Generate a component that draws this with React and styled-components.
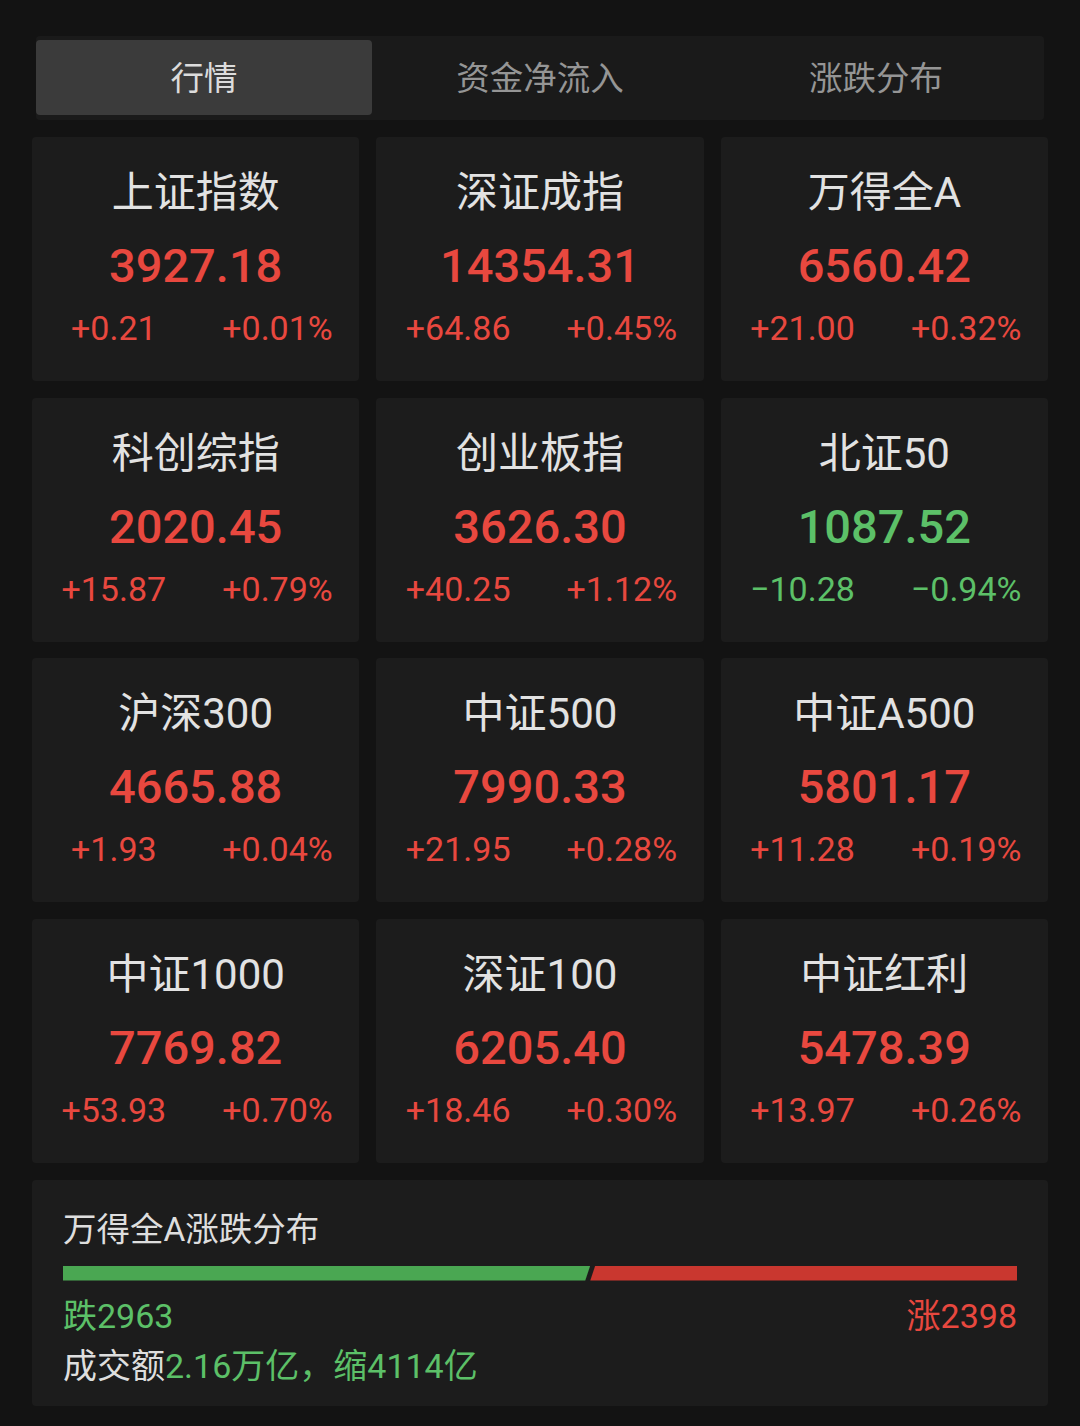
import styled, { createGlobalStyle } from 'styled-components';

const indices = [
  { name: '上证指数', value: '3927.18', change: '+0.21', pct: '+0.01%', up: true },
  { name: '深证成指', value: '14354.31', change: '+64.86', pct: '+0.45%', up: true },
  { name: '万得全A', value: '6560.42', change: '+21.00', pct: '+0.32%', up: true },
  { name: '科创综指', value: '2020.45', change: '+15.87', pct: '+0.79%', up: true },
  { name: '创业板指', value: '3626.30', change: '+40.25', pct: '+1.12%', up: true },
  { name: '北证50', value: '1087.52', change: '−10.28', pct: '−0.94%', up: false },
  { name: '沪深300', value: '4665.88', change: '+1.93', pct: '+0.04%', up: true },
  { name: '中证500', value: '7990.33', change: '+21.95', pct: '+0.28%', up: true },
  { name: '中证A500', value: '5801.17', change: '+11.28', pct: '+0.19%', up: true },
  { name: '中证1000', value: '7769.82', change: '+53.93', pct: '+0.70%', up: true },
  { name: '深证100', value: '6205.40', change: '+18.46', pct: '+0.30%', up: true },
  { name: '中证红利', value: '5478.39', change: '+13.97', pct: '+0.26%', up: true },
];

const tabs = ['行情', '资金净流入', '涨跌分布'];

const RED = '#e8483f';
const GREEN = '#5cc068';

const down = 2963;
const rise = 2398;

export default function App() {
  const downShare = (down / (down + rise)) * 100;
  return (
    <>
      <GlobalStyle />
      <Page>
        <TabBar>
          {tabs.map((t, i) => (
            <Tab key={t} $active={i === 0}>{t}</Tab>
          ))}
        </TabBar>
        <Grid>
          {indices.map((item) => (
            <Card key={item.name}>
              <Name>{item.name}</Name>
              <Value $up={item.up}>{item.value}</Value>
              <Changes $up={item.up}>
                <span>{item.change}</span>
                <span>{item.pct}</span>
              </Changes>
            </Card>
          ))}
        </Grid>
        <Panel>
          <PanelTitle>万得全A涨跌分布</PanelTitle>
          <Bar>
            <DownPart style={{ width: `${downShare}%` }} />
            <UpPart />
          </Bar>
          <Counts>
            <Count $up={false}>跌{down}</Count>
            <Count $up={true}>涨{rise}</Count>
          </Counts>
          <Turnover>
            成交额<em>2.16万亿，缩4114亿</em>
          </Turnover>
        </Panel>
      </Page>
    </>
  );
}

const GlobalStyle = createGlobalStyle`
  html, body {
    margin: 0;
    background: #131313;
  }
  body {
    font-family: Roboto, "Noto Sans CJK SC", sans-serif;
  }
`;

const Page = styled.div`
  width: 1080px;
  height: 1426px;
  box-sizing: border-box;
  padding: 36px 32px 0;
  background: #131313;
`;

const TabBar = styled.div`
  margin: 0 4px 17px;
  height: 84px;
  padding: 4px 0 5px;
  box-sizing: border-box;
  display: grid;
  grid-template-columns: repeat(3, 1fr);
  background: #1a1a1a;
  border-radius: 4px;
`;

const Tab = styled.div`
  display: flex;
  align-items: center;
  justify-content: center;
  padding-bottom: 5px;
  border-radius: 4px;
  font-family: "Noto Sans CJK SC", sans-serif;
  font-size: 33.5px;
  color: ${(p) => (p.$active ? '#dcdcdc' : '#959595')};
  background: ${(p) => (p.$active ? '#3b3b3b' : 'transparent')};
`;

const Grid = styled.div`
  display: grid;
  grid-template-columns: repeat(3, 1fr);
  grid-auto-rows: 244px;
  gap: 16.5px 17px;
`;

const Card = styled.div`
  background: #1c1c1c;
  border-radius: 4px;
  display: flex;
  flex-direction: column;
  align-items: center;
  padding-top: 32px;
  box-sizing: border-box;
`;

const Name = styled.div`
  font-family: Roboto, "Noto Sans CJK SC", sans-serif;
  font-size: 42px;
  line-height: 48px;
  color: #e2e2e2;
`;

const Value = styled.div`
  margin-top: 21px;
  font-size: 47px;
  line-height: 56px;
  font-weight: 500;
  color: ${(p) => (p.$up ? RED : GREEN)};
`;

const Changes = styled.div`
  margin-top: 14px;
  width: 100%;
  display: grid;
  grid-template-columns: 1fr 1fr;
  font-size: 34px;
  line-height: 40px;
  color: ${(p) => (p.$up ? RED : GREEN)};

  span {
    text-align: center;
  }
`;

const Panel = styled.div`
  margin-top: 17px;
  height: 226px;
  background: #1c1c1c;
  border-radius: 4px;
  padding: 30px 31px 0;
  box-sizing: border-box;
`;

const PanelTitle = styled.div`
  font-size: 33.5px;
  line-height: 40px;
  color: #dedede;
`;

const Bar = styled.div`
  margin-top: 16px;
  height: 15px;
  display: flex;
`;

const DownPart = styled.div`
  height: 100%;
  background: #4aa752;
  clip-path: polygon(0 0, 100% 0, calc(100% - 5px) 100%, 0 100%);
`;

const UpPart = styled.div`
  flex: 1;
  height: 100%;
  background: #c9372f;
  clip-path: polygon(5px 0, 100% 0, 100% 100%, 0 100%);
`;

const Counts = styled.div`
  margin-top: 15px;
  display: flex;
  justify-content: space-between;
`;

const Count = styled.div`
  font-size: 34px;
  line-height: 40px;
  color: ${(p) => (p.$up ? RED : GREEN)};
`;

const Turnover = styled.div`
  margin-top: 10px;
  font-size: 34px;
  line-height: 40px;
  color: #dedede;

  em {
    font-style: normal;
    color: ${GREEN};
  }
`;
